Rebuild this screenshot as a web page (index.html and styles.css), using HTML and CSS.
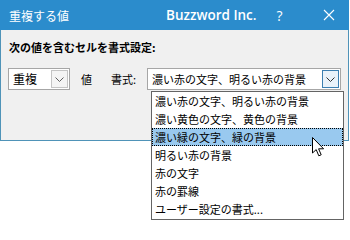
FILE: index.html
```html
<!DOCTYPE html>
<html lang="ja">
<head>
  <meta charset="UTF-8" />
  <title>重複する値</title>
  <link rel="stylesheet" href="styles.css">
</head>
<body>

  <div class="window">
    <div class="titlebar">
      <span class="title">重複する値</span>
      <span class="brand">Buzzword Inc.</span>
      <span class="help">?</span>
      <svg class="close" width="12" height="12" viewBox="0 0 12 12">
        <path d="M1 1 L11 11 M11 1 L1 11" stroke="#fff" stroke-width="1.1" fill="none"/>
      </svg>
    </div>

    <div class="content">
      <p class="prompt">次の値を含むセルを書式設定:</p>
      <div class="row">
        <div class="combo combo-rule">
          <span class="combo-text">重複</span>
          <span class="combo-btn">
            <svg width="9" height="5" viewBox="0 0 9 5"><path d="M0.5 0.5 L4.5 4.5 L8.5 0.5" stroke="#606060" fill="none"/></svg>
          </span>
        </div>
        <span class="lbl lbl-value">値</span>
        <span class="lbl lbl-format">書式:</span>
        <div class="combo combo-format">
          <span class="combo-text">濃い赤の文字、明るい赤の背景</span>
          <span class="combo-btn active">
            <svg width="9" height="5" viewBox="0 0 9 5"><path d="M0.5 0.5 L4.5 4.5 L8.5 0.5" stroke="#303030" fill="none"/></svg>
          </span>
        </div>
      </div>
    </div>
  </div>

  <ul class="dropdown">
    <li>濃い赤の文字、明るい赤の背景</li>
    <li>濃い黄色の文字、黄色の背景</li>
    <li class="selected">濃い緑の文字、緑の背景</li>
    <li>明るい赤の背景</li>
    <li>赤の文字</li>
    <li>赤の罫線</li>
    <li>ユーザー設定の書式...</li>
  </ul>

  <svg class="cursor" width="14" height="21" viewBox="0 0 14 21">
    <path d="M0.5 0.5 L0.5 16 L4.2 12.6 L6.8 18.8 L9.2 17.8 L6.6 11.8 L11.6 11.8 Z" fill="#fff" stroke="#000" stroke-width="1" stroke-linejoin="miter"/>
  </svg>

</body>
</html>
```

FILE: styles.css
```css
* {
  margin: 0;
  padding: 0;
  box-sizing: border-box;
}

body {
  position: relative;
  width: 350px;
  height: 240px;
  background: #fff;
  font-family: "Noto Sans CJK JP", "Noto Sans", sans-serif;
  font-size: 11px;
  color: #000;
  overflow: hidden;
}

.window {
  width: 349px;
  height: 141px;
  border: 1px solid #4f93b8;
  border-top: none;
  background: #f0f0f0;
}

.titlebar {
  height: 30px;
  margin: 0 -1px;
  background: #2b8ccc;
  color: #fff;
  display: flex;
  align-items: center;
  padding-left: 9px;
}

.title {
  font-size: 12px;
  width: 157px;
}

.brand {
  font-family: "Open Sans", sans-serif;
  font-weight: 600;
  font-size: 13.5px;
}

.help {
  font-family: "Open Sans", sans-serif;
  font-size: 14px;
  margin-left: 20px;
}

.close {
  margin-left: 40px;
}

.content {
  padding: 9px 0 0 7px;
}

.prompt {
  font-weight: bold;
  font-size: 11px;
  line-height: 16px;
  padding-left: 1px;
}

.row {
  display: flex;
  align-items: center;
  margin-top: 13px;
}

.combo {
  height: 22px;
  border: 1px solid #a6a6a6;
  background: #fff;
  display: flex;
  align-items: center;
  justify-content: space-between;
  padding: 1px;
}

.combo-text {
  padding-left: 3px;
  line-height: 18px;
}

.combo-rule {
  width: 62px;
}

.combo-rule .combo-text {
  font-size: 12px;
}

.combo-btn {
  width: 17px;
  height: 18px;
  border: 1px solid #c4c4c4;
  background: #f4f4f4;
  display: flex;
  align-items: center;
  justify-content: center;
}

.combo-btn.active {
  border-color: #3c7fb1;
  background: #e9f2fa;
}

.lbl {
  font-size: 11px;
}

.lbl-value {
  margin-left: 11px;
}

.lbl-format {
  margin-left: 19px;
}

.combo-format {
  width: 194px;
  margin-left: 11px;
}

.dropdown {
  position: absolute;
  left: 151px;
  top: 91px;
  width: 193px;
  height: 129px;
  border: 1px solid #646464;
  background: #fff;
  list-style: none;
}

.dropdown li {
  height: 18px;
  line-height: 17px;
  padding-left: 2px;
  border: 1px dotted transparent;
  white-space: nowrap;
}

.dropdown li.selected {
  background: #99c9ef;
  border-color: #000;
}

.cursor {
  position: absolute;
  left: 312px;
  top: 137px;
}
```
